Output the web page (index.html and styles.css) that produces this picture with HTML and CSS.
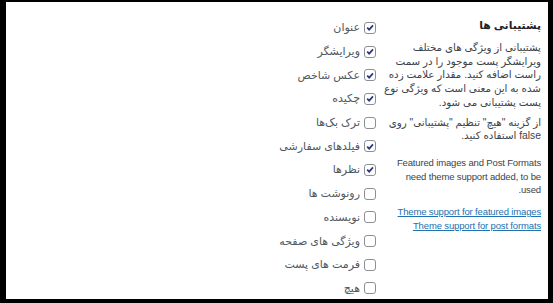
FILE: index.html
```html
<!DOCTYPE html>
<html lang="fa" dir="rtl">
<head>
<meta charset="utf-8">
<link rel="stylesheet" href="styles.css">
</head>
<body>
<div class="panel">
  <div class="help">
    <h3 class="title">پشتیبانی ها</h3>
    <p class="p1">پشتیبانی از ویژگی های مختلف<br>ویرایشگر پست موجود را در سمت<br>راست اضافه کنید. مقدار علامت زده<br>شده به این معنی است که ویژگی نوع<br>پست پشتیبانی می شود.</p>
    <p class="p2">از گزینه "هیچ" تنظیم "پشتیبانی" روی<br>false استفاده کنید.</p>
    <p class="p3 en">Featured images and Post Formats<br>need theme support added, to be<br>used.</p>
    <p class="links en"><a href="#">Theme support for featured images</a><br><a href="#">Theme support for post formats</a></p>
  </div>
  <ul class="list">
    <li class="row"><span class="box on"><svg viewBox="0 0 12 12"><path d="M2.6 6.2 L5 8.6 L9.6 3.4"/></svg></span><span class="lbl">عنوان</span></li>
    <li class="row"><span class="box on"><svg viewBox="0 0 12 12"><path d="M2.6 6.2 L5 8.6 L9.6 3.4"/></svg></span><span class="lbl">ویرایشگر</span></li>
    <li class="row"><span class="box on"><svg viewBox="0 0 12 12"><path d="M2.6 6.2 L5 8.6 L9.6 3.4"/></svg></span><span class="lbl">عکس شاخص</span></li>
    <li class="row"><span class="box on"><svg viewBox="0 0 12 12"><path d="M2.6 6.2 L5 8.6 L9.6 3.4"/></svg></span><span class="lbl">چکیده</span></li>
    <li class="row"><span class="box"></span><span class="lbl">ترک بک‌ها</span></li>
    <li class="row"><span class="box on"><svg viewBox="0 0 12 12"><path d="M2.6 6.2 L5 8.6 L9.6 3.4"/></svg></span><span class="lbl">فیلدهای سفارشی</span></li>
    <li class="row"><span class="box on"><svg viewBox="0 0 12 12"><path d="M2.6 6.2 L5 8.6 L9.6 3.4"/></svg></span><span class="lbl">نظرها</span></li>
    <li class="row"><span class="box"></span><span class="lbl">رونوشت ها</span></li>
    <li class="row"><span class="box"></span><span class="lbl">نویسنده</span></li>
    <li class="row"><span class="box"></span><span class="lbl">ویژگی های صفحه</span></li>
    <li class="row"><span class="box"></span><span class="lbl">فرمت های پست</span></li>
    <li class="row"><span class="box"></span><span class="lbl">هیچ</span></li>
  </ul>
</div>
</body>
</html>
```

FILE: styles.css
```css
html, body {
  margin: 0;
  padding: 0;
  background: #000;
}
body {
  padding: 2px 5px 4px 6px;
  height: 303px;
  box-sizing: border-box;
  overflow: hidden;
  font-family: "Liberation Sans", "DejaVu Sans", sans-serif;
}
.panel {
  background: #fff;
  height: 297px;
  display: flex;
  flex-direction: row;
  align-items: flex-start;
  padding-right: 7px;
  box-sizing: border-box;
  gap: 19px;
  overflow: hidden;
}
.help {
  width: 146px;
  flex: none;
  color: #3c434a;
  font-size: 10.3px;
  line-height: 13.7px;
  padding-top: 15px;
  white-space: nowrap;
}
.title {
  margin: 0 0 8px;
  font-size: 10.8px;
  line-height: 16px;
  font-weight: bold;
  color: #1d2327;
}
.help p {
  margin: 0;
}
.en {
  font-size: 9.5px;
  letter-spacing: -0.15px;
}
.p2 { margin-top: 6px !important; }
.p3 { margin-top: 13px !important; }
.links { margin-top: 8px !important; }
.links a {
  color: #2271b1;
  text-decoration: underline;
}
.list {
  list-style: none;
  margin: 0;
  padding: 14px 0 0;
}
.row {
  height: 23.7px;
  display: flex;
  align-items: center;
  gap: 4px;
}
.box {
  width: 12px;
  height: 12px;
  border: 1px solid #8c8f94;
  border-radius: 3px;
  box-sizing: border-box;
  background: #fff;
  display: flex;
  align-items: center;
  justify-content: center;
  flex: none;
}
.box svg {
  width: 11px;
  height: 11px;
  fill: none;
  stroke: #2f3380;
  stroke-width: 2;
}
.lbl {
  font-size: 11px;
  color: #50575e;
}
```
